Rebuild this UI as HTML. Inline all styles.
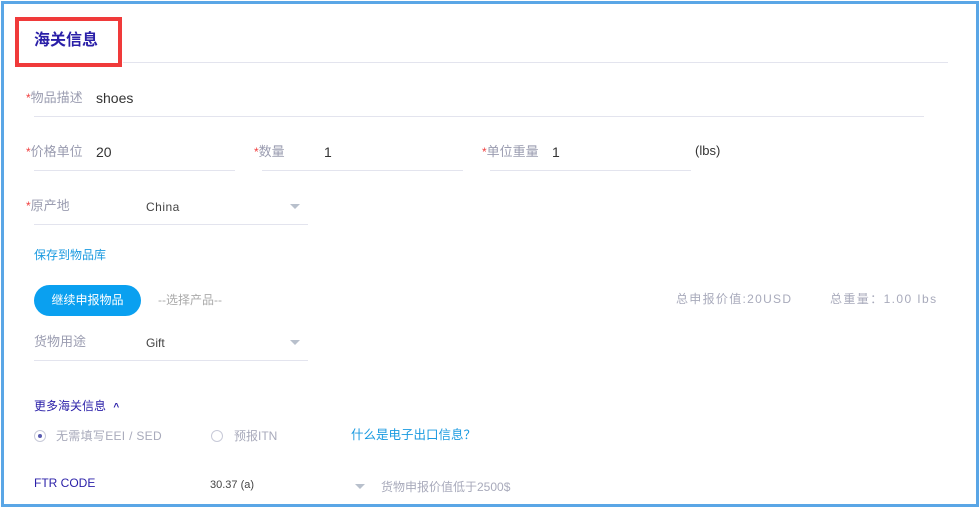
<!DOCTYPE html>
<html><head><meta charset="utf-8"><style>
body{margin:0;width:980px;height:507px;background:#fff;font-family:"Liberation Sans","Noto Sans CJK SC",sans-serif;position:relative;overflow:hidden}
.a{position:absolute;white-space:nowrap;line-height:16px}
.frame{position:absolute;left:1px;top:1px;width:972px;height:500px;border:3px solid #5aa6e6;box-sizing:content-box}
.ln{position:absolute;height:1px;background:#e3e4ee}
.lab{color:#9a9cb0;font-size:13px}
.st{color:#f04040;font-size:12px;vertical-align:top}
.val{color:#333;font-size:13px}
.arr{position:absolute;width:0;height:0;border-left:5px solid transparent;border-right:5px solid transparent;border-top:5px solid #b8c0cc}
</style></head><body>
<div class="frame"></div>
<div class="a" style="left:15px;top:17px;width:99px;height:42px;border:4px solid #f03a3a"></div>
<div class="a" style="left:34px;top:33px;font-size:16px;font-weight:bold;color:#2a1fa8">海关信息</div>
<div class="ln" style="left:123px;top:62px;width:825px"></div>

<div class="a lab" style="left:26px;top:90px"><span class="st">*</span>物品描述</div>
<div class="a val" style="left:96px;top:90px;font-size:14px">shoes</div>
<div class="ln" style="left:34px;top:116px;width:890px"></div>

<div class="a lab" style="left:26px;top:144px"><span class="st">*</span>价格单位</div>
<div class="a val" style="left:96px;top:144px;font-size:14px">20</div>
<div class="ln" style="left:34px;top:170px;width:201px"></div>
<div class="a lab" style="left:254px;top:144px"><span class="st">*</span>数量</div>
<div class="a val" style="left:324px;top:144px;font-size:14px">1</div>
<div class="ln" style="left:262px;top:170px;width:201px"></div>
<div class="a lab" style="left:482px;top:144px"><span class="st">*</span>单位重量</div>
<div class="a val" style="left:552px;top:144px;font-size:14px">1</div>
<div class="ln" style="left:490px;top:170px;width:201px"></div>
<div class="a val" style="left:695px;top:143px">(lbs)</div>

<div class="a lab" style="left:26px;top:198px"><span class="st">*</span>原产地</div>
<div class="a val" style="left:146px;top:199px;font-size:12px;color:#444;letter-spacing:0.5px">China</div>
<div class="arr" style="left:290px;top:204px"></div>
<div class="ln" style="left:34px;top:224px;width:274px"></div>

<div class="a" style="left:34px;top:247px;font-size:12px;color:#1a9ae0">保存到物品库</div>
<div class="a" style="left:34px;top:285px;width:107px;height:31px;border-radius:16px;background:#0aa0f0;color:#fff;font-size:12px;text-align:center;line-height:31px">继续申报物品</div>
<div class="a" style="left:158px;top:292px;font-size:12px;color:#aaa">--选择产品--</div>
<div class="a" style="left:676px;top:291px;font-size:12px;color:#a8aabb;letter-spacing:1.3px">总申报价值:20USD</div>
<div class="a" style="left:830px;top:291px;font-size:12px;color:#a8aabb;letter-spacing:1.4px">总重量：1.00 Ibs</div>

<div class="a lab" style="left:34px;top:334px">货物用途</div>
<div class="a val" style="left:146px;top:335px;font-size:12px;color:#444">Gift</div>
<div class="arr" style="left:290px;top:340px"></div>
<div class="ln" style="left:34px;top:360px;width:274px"></div>

<div class="a" style="left:34px;top:398px;font-size:12px;color:#2a1fa8">更多海关信息 <span style="font-size:10px;font-weight:bold;margin-left:4px">^</span></div>
<div class="a" style="left:34px;top:430px;width:10px;height:10px;border:1px solid #c8cad8;border-radius:50%"></div>
<div class="a" style="left:38px;top:434px;width:4px;height:4px;background:#5a5cb0;border-radius:50%"></div>
<div class="a" style="left:56px;top:428px;font-size:12px;color:#a8aabb;letter-spacing:0.3px">无需填写EEI / SED</div>
<div class="a" style="left:211px;top:430px;width:10px;height:10px;border:1px solid #c8cad8;border-radius:50%"></div>
<div class="a" style="left:234px;top:428px;font-size:12px;color:#a8aabb">预报ITN</div>
<div class="a" style="left:351px;top:427px;font-size:12.5px;color:#1a9ae0">什么是电子出口信息？</div>

<div class="a" style="left:34px;top:475px;font-size:12px;color:#2a1fa8">FTR CODE</div>
<div class="a" style="left:210px;top:477px;font-size:11px;color:#444">30.37 (a)</div>
<div class="arr" style="left:355px;top:484px"></div>
<div class="a" style="left:381px;top:479px;font-size:12px;color:#a8aabb">货物申报价值低于2500$</div>
</body></html>
